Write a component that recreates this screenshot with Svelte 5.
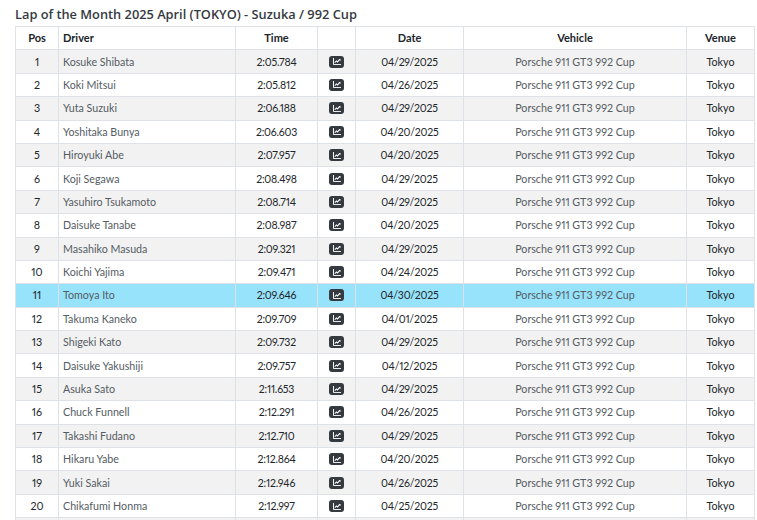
<script>
	const names = [
		['Kosuke Shibata', '2:05.784', '04/29/2025'],
		['Koki Mitsui', '2:05.812', '04/26/2025'],
		['Yuta Suzuki', '2:06.188', '04/29/2025'],
		['Yoshitaka Bunya', '2:06.603', '04/20/2025'],
		['Hiroyuki Abe', '2:07.957', '04/20/2025'],
		['Koji Segawa', '2:08.498', '04/29/2025'],
		['Yasuhiro Tsukamoto', '2:08.714', '04/29/2025'],
		['Daisuke Tanabe', '2:08.987', '04/20/2025'],
		['Masahiko Masuda', '2:09.321', '04/29/2025'],
		['Koichi Yajima', '2:09.471', '04/24/2025'],
		['Tomoya Ito', '2:09.646', '04/30/2025'],
		['Takuma Kaneko', '2:09.709', '04/01/2025'],
		['Shigeki Kato', '2:09.732', '04/29/2025'],
		['Daisuke Yakushiji', '2:09.757', '04/12/2025'],
		['Asuka Sato', '2:11.653', '04/29/2025'],
		['Chuck Funnell', '2:12.291', '04/26/2025'],
		['Takashi Fudano', '2:12.710', '04/29/2025'],
		['Hikaru Yabe', '2:12.864', '04/20/2025'],
		['Yuki Sakai', '2:12.946', '04/26/2025'],
		['Chikafumi Honma', '2:12.997', '04/25/2025'],
	];
	const currentDriver = 'Tomoya Ito';
</script>

<main>
	<h1>Lap of the Month 2025 April (TOKYO) - Suzuka / 992 Cup</h1>
	<table>
		<colgroup>
			<col style="width: 43px" />
			<col style="width: 177px" />
			<col style="width: 82px" />
			<col style="width: 38px" />
			<col style="width: 108px" />
			<col style="width: 223px" />
			<col style="width: 68px" />
		</colgroup>
		<thead>
			<tr>
				<th>Pos</th>
				<th class="left">Driver</th>
				<th>Time</th>
				<th></th>
				<th>Date</th>
				<th>Vehicle</th>
				<th>Venue</th>
			</tr>
		</thead>
		<tbody>
			{#each names as row, i}
				<tr class:odd={i % 2 === 0} class:current={row[0] === currentDriver}>
					<td>{i + 1}</td>
					<td class="left muted">{row[0]}</td>
					<td class="num">{row[1]}</td>
					<td>
						<span class="btn">
							<svg width="8" height="7" viewBox="0 0 9 8" aria-hidden="true">
								<path d="M0.5 0v7.5H9" fill="none" stroke="#fff" stroke-width="1.1" />
								<path d="M2 5.2 3.8 3.4 5 4.5 7.6 1.8" fill="none" stroke="#fff" stroke-width="1.2" />
								<path d="M6.2 1H8.5V3.3Z" fill="#fff" />
							</svg>
						</span>
					</td>
					<td class="num">{row[2]}</td>
					<td class="muted">Porsche 911 GT3 992 Cup</td>
					<td>Tokyo</td>
				</tr>
			{/each}
			<tr class="odd">
				<td>&nbsp;</td><td></td><td></td><td></td><td></td><td></td><td></td>
			</tr>
		</tbody>
	</table>
</main>

<style>
	:global(body) {
		background: #fff;
		overflow: hidden;
	}

	main {
		padding: 5px 0 0 15px;
		font-family: Lato, 'Open Sans', sans-serif;
		color: #212529;
	}

	h1 {
		margin: 0 0 3px;
		font-family: 'Open Sans', sans-serif;
		font-size: 12.8px;
		line-height: 18px;
		font-weight: 600;
		color: #343a40;
	}

	table {
		table-layout: fixed;
		width: 739px;
		border-collapse: collapse;
		font-size: 10.7px;
		font-variant-numeric: proportional-nums;
	}

	th,
	td {
		border: 1px solid #dee2e6;
		padding: 0 4px;
		text-align: center;
		line-height: 16px;
	}

	th {
		height: 22.4px;
		font-size: 11px;
		font-weight: 700;
	}

	td {
		height: 22.4px;
	}

	.left {
		text-align: left;
	}

	.muted {
		color: #555c63;
	}

	.num {
		font-size: 10.5px;
		letter-spacing: -0.2px;
	}

	.odd td {
		background: #f2f2f2;
	}

	.current td {
		background: #97e3fb;
	}

	.btn {
		display: flex;
		align-items: center;
		justify-content: center;
		width: 15px;
		height: 12px;
		margin: 0 auto;
		border-radius: 3px;
		background: #343a40;
	}
</style>
